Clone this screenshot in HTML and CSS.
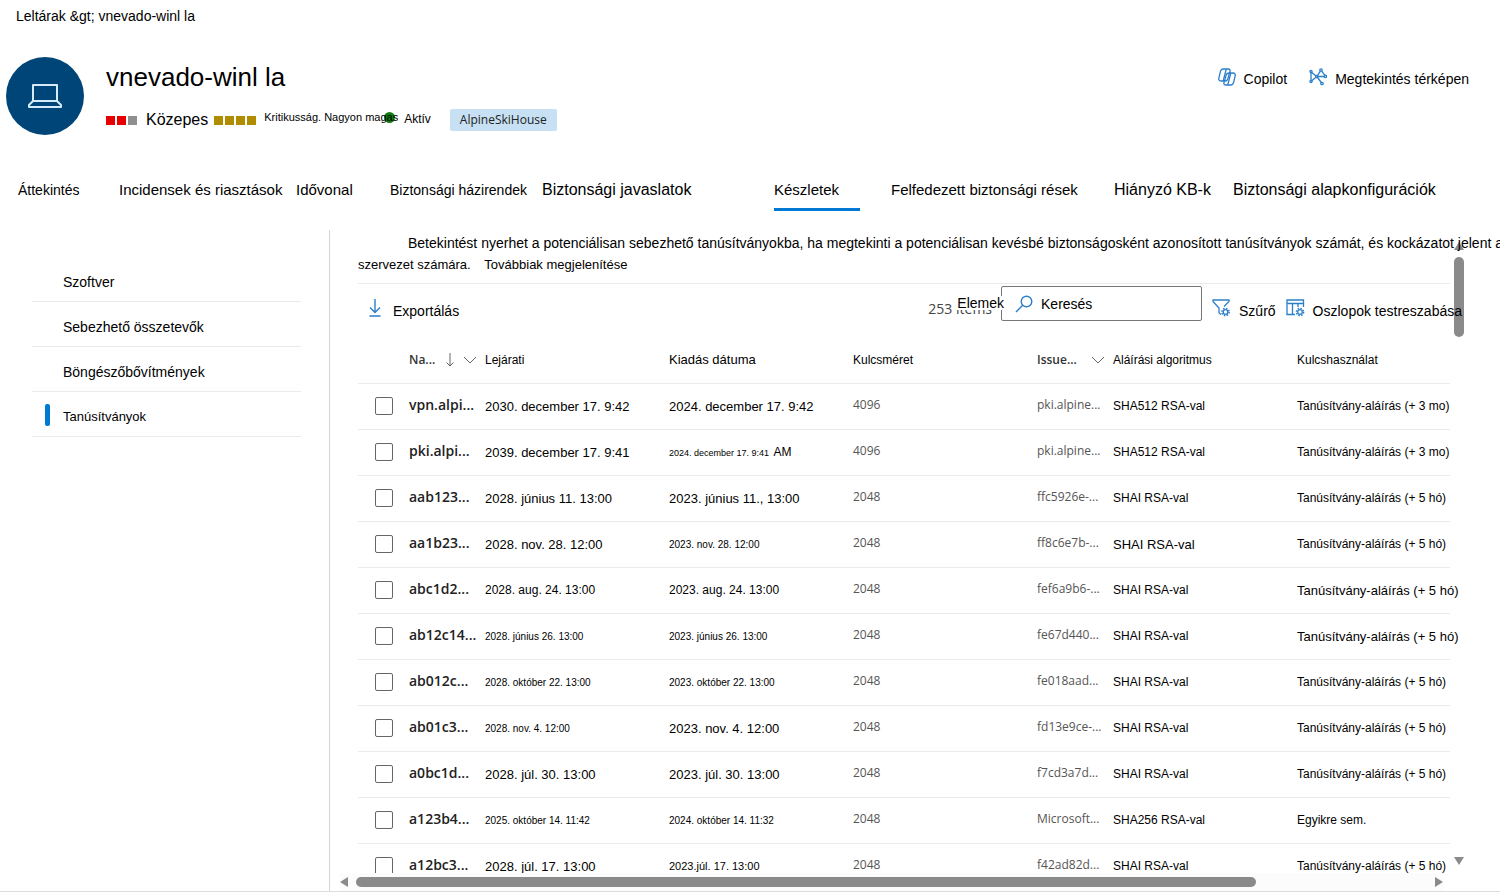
FILE: index.html
```
<!DOCTYPE html>
<html lang="hu">

<head>
    <meta charset="UTF-8">
    <meta name="viewport" content="width=device-width, initial-scale=1.0">
    <title>vnevado-winl la</title>
    <link rel="stylesheet" href="styles.css">
</head>

<body>

    <nav class="breadcrumb">Leltárak &amp;gt; vnevado-winl la</nav>

    <header class="device">
        <div class="avatar">
            <svg width="36" height="26" viewBox="0 0 36 26" fill="none" stroke="#d6ebfa" stroke-width="2" stroke-linejoin="round">
                <path d="M6 2h24v16H6z" />
                <path d="M6 18l-4 4v2h32v-2l-4-4z" />
            </svg>
        </div>
        <div class="device-info">
            <h1>vnevado-winl la</h1>
            <div class="meta">
                <span class="squares risk"><i></i><i></i><i></i></span>
                <span class="level">Közepes</span>
                <span class="squares critical"><i></i><i></i><i></i><i></i></span>
                <span class="criticality">Kritikusság. Nagyon magas</span>
                <span class="status">Aktív</span>
                <span class="tag">AlpineSkiHouse</span>
            </div>
        </div>
        <div class="actions">
            <button type="button">
                <svg width="18" height="18" viewBox="0 0 18 18" fill="none" stroke="#2b7fc9" stroke-width="1.300" stroke-linejoin="round">
                    <path d="M5 1h5.500c1.400 0 1.900 1.100 1.500 2.400L9.900 10.600C9.400 12.300 8.600 13 7 13H2.900C1.200 13 .4 11.800.8 10.300L2.500 3.200C2.900 1.800 3.700 1 5 1z" />
                    <path d="M13 17H7.500c-1.400 0-1.900-1.100-1.500-2.400L8.100 7.400C8.600 5.700 9.400 5 11 5h4.100c1.700 0 2.500 1.200 2.100 2.700l-1.700 7.100c-.4 1.400-1.200 2.200-2.500 2.200z" />
                    <path d="M8.500 1.200C8 2 7.800 3 7.500 4L5.200 13M9.500 16.800c.5-.8.700-1.800 1-2.800L12.800 5" />
                </svg>
                Copilot
            </button>
            <button type="button">
                <svg width="18" height="18" viewBox="0 0 18 18" fill="none" stroke="#2b7fc9" stroke-width="1.300">
                    <path d="M2 4v9M2.800 4.400l4.200 3.500M2.800 12.800l4.200-3.500M8.400 7.600l3-4.500M12.600 3.100l3.200 4.100M8.800 8.500h6.300M8.500 9.500l3.800 5" />
                    <circle cx="2" cy="3.500" r="1.100" />
                    <circle cx="2" cy="13.500" r="1.100" />
                    <circle cx="7.700" cy="8.600" r="1.100" />
                    <circle cx="12" cy="2" r="1.200" />
                    <circle cx="16.400" cy="8.300" r="1.200" />
                    <circle cx="13" cy="15.500" r="1.200" />
                </svg>
                Megtekintés térképen
            </button>
        </div>
    </header>

    <nav class="tabs">
        <a href="#" class="small">Áttekintés</a>
        <a href="#">Incidensek és riasztások</a>
        <a href="#">Idővonal</a>
        <a href="#" class="small">Biztonsági házirendek</a>
        <a href="#" class="large">Biztonsági javaslatok</a>
        <a href="#" class="active">Készletek</a>
        <a href="#">Felfedezett biztonsági rések</a>
        <a href="#" class="large">Hiányzó KB-k</a>
        <a href="#" class="large">Biztonsági alapkonfigurációk</a>
    </nav>

    <main>
        <aside>
            <nav class="side">
                <a href="#">Szoftver</a>
                <a href="#">Sebezhető összetevők</a>
                <a href="#">Böngészőbővítmények</a>
                <a href="#" class="active">Tanúsítványok</a>
            </nav>
        </aside>

        <section class="panel">
            <p class="intro"><span class="lead">Betekintést nyerhet a potenciálisan sebezhető tanúsítványokba, ha megtekinti a potenciálisan kevésbé biztonságosként azonosított tanúsítványok számát, és kockázatot jelent a</span><br>szervezet számára. <a href="#">Továbbiak megjelenítése</a></p>

            <div class="toolbar">
                <button type="button" class="export">
                    <svg width="16" height="18" viewBox="0 0 16 18" fill="none" stroke="#2b7fc9" stroke-width="1.400">
                        <path d="M8 0v13M3 8.500l5 5 5-5M2.500 17h11" />
                    </svg>
                    Exportálás
                </button>
                <span class="count">253 items<span class="count-label">Elemek</span></span>
                <label class="search">
                    <svg width="18" height="18" viewBox="0 0 18 18" fill="none" stroke="#2b7fc9" stroke-width="1.400">
                        <circle cx="11.500" cy="6.500" r="5.300" />
                        <path d="M7.700 10.300L1 17" />
                    </svg>
                    <input type="search" placeholder="Keresés" aria-label="Keresés">
                </label>
                <button type="button">
                    <svg width="19" height="18" viewBox="0 0 19 18" fill="none" stroke="#2b7fc9" stroke-width="1.300">
                        <path d="M9 15.500l-2-1.500V9L1 2.500V1h16v1.500L12 7.500" />
                        <circle cx="13.500" cy="13" r="2.300" />
                        <circle cx="13.500" cy="13" r="3.600" stroke-dasharray="1.500 1.330" stroke-width="1.500" />
                    </svg>
                    Szűrő
                </button>
                <button type="button">
                    <svg width="19" height="18" viewBox="0 0 19 18" fill="none" stroke="#2b7fc9" stroke-width="1.300">
                        <path d="M9 15.500H1V1h16.500v7M1 4.500h16.500M6.500 4.500v11M12 4.500V8" />
                        <circle cx="14" cy="13" r="2.300" />
                        <circle cx="14" cy="13" r="3.600" stroke-dasharray="1.500 1.330" stroke-width="1.500" />
                    </svg>
                    Oszlopok testreszabása
                </button>
            </div>

            <div class="table-wrap">
                <table>
                    <colgroup>
                        <col class="c-check">
                        <col class="c-name">
                        <col class="c-date">
                        <col class="c-date">
                        <col class="c-date">
                        <col class="c-name">
                        <col class="c-date">
                        <col>
                    </colgroup>
                    <thead>
                        <tr>
                            <th></th>
                            <th class="sortable"><div>Na...
                                <svg class="arrow" width="10" height="14" viewBox="0 0 10 14" fill="none" stroke="#666"><path d="M5 0v13M1.500 9.500L5 13l3.500-3.500" /></svg>
                                <svg class="chevron" width="14" height="8" viewBox="0 0 14 8" fill="none" stroke="#666"><path d="M1 1l6 6 6-6" /></svg>
                            </div></th>
                            <th>Lejárati</th>
                            <th class="date">Kiadás dátuma</th>
                            <th>Kulcsméret</th>
                            <th class="sortable"><div>Issue...
                                <svg class="chevron" width="14" height="8" viewBox="0 0 14 8" fill="none" stroke="#666"><path d="M1 1l6 6 6-6" /></svg>
                            </div></th>
                            <th>Aláírási algoritmus</th>
                            <th>Kulcshasználat</th>
                        </tr>
                    </thead>
                    <tbody>
                        <tr>
                            <td><input type="checkbox" aria-label="vpn.alpi..."></td>
                            <td class="name">vpn.alpi...</td>
                            <td class="date">2030. december 17. 9:42</td>
                            <td class="date">2024. december 17. 9:42</td>
                            <td class="gray">4096</td>
                            <td class="gray">pki.alpine...</td>
                            <td>SHA512 RSA-val</td>
                            <td>Tanúsítvány-aláírás (+ 3 mo)</td>
                        </tr>
                        <tr>
                            <td><input type="checkbox" aria-label="pki.alpi..."></td>
                            <td class="name">pki.alpi...</td>
                            <td class="date">2039. december 17. 9:41</td>
                            <td class="date-tiny">2024. december 17. 9:41 <span class="ampm">AM</span></td>
                            <td class="gray">4096</td>
                            <td class="gray">pki.alpine...</td>
                            <td>SHA512 RSA-val</td>
                            <td>Tanúsítvány-aláírás (+ 3 mo)</td>
                        </tr>
                        <tr>
                            <td><input type="checkbox" aria-label="aab123..."></td>
                            <td class="name">aab123...</td>
                            <td class="date">2028. június 11. 13:00</td>
                            <td class="date">2023. június 11., 13:00</td>
                            <td class="gray">2048</td>
                            <td class="gray">ffc5926e-...</td>
                            <td>SHAI RSA-val</td>
                            <td>Tanúsítvány-aláírás (+ 5 hó)</td>
                        </tr>
                        <tr>
                            <td><input type="checkbox" aria-label="aa1b23..."></td>
                            <td class="name">aa1b23...</td>
                            <td class="date">2028. nov. 28. 12:00</td>
                            <td class="date-small">2023. nov. 28. 12:00</td>
                            <td class="gray">2048</td>
                            <td class="gray">ff8c6e7b-...</td>
                            <td class="wide">SHAI RSA-val</td>
                            <td>Tanúsítvány-aláírás (+ 5 hó)</td>
                        </tr>
                        <tr>
                            <td><input type="checkbox" aria-label="abc1d2..."></td>
                            <td class="name">abc1d2...</td>
                            <td>2028. aug. 24. 13:00</td>
                            <td>2023. aug. 24. 13:00</td>
                            <td class="gray">2048</td>
                            <td class="gray">fef6a9b6-...</td>
                            <td>SHAI RSA-val</td>
                            <td class="wide">Tanúsítvány-aláírás (+ 5 hó)</td>
                        </tr>
                        <tr>
                            <td><input type="checkbox" aria-label="ab12c14..."></td>
                            <td class="name">ab12c14...</td>
                            <td class="date-small">2028. június 26. 13:00</td>
                            <td class="date-small">2023. június 26. 13:00</td>
                            <td class="gray">2048</td>
                            <td class="gray">fe67d440...</td>
                            <td>SHAI RSA-val</td>
                            <td class="wide">Tanúsítvány-aláírás (+ 5 hó)</td>
                        </tr>
                        <tr>
                            <td><input type="checkbox" aria-label="ab012c..."></td>
                            <td class="name">ab012c...</td>
                            <td class="date-small">2028. október 22. 13:00</td>
                            <td class="date-small">2023. október 22. 13:00</td>
                            <td class="gray">2048</td>
                            <td class="gray">fe018aad...</td>
                            <td>SHAI RSA-val</td>
                            <td>Tanúsítvány-aláírás (+ 5 hó)</td>
                        </tr>
                        <tr>
                            <td><input type="checkbox" aria-label="ab01c3..."></td>
                            <td class="name">ab01c3...</td>
                            <td class="date-small">2028. nov. 4. 12:00</td>
                            <td class="date">2023. nov. 4. 12:00</td>
                            <td class="gray">2048</td>
                            <td class="gray">fd13e9ce-...</td>
                            <td>SHAI RSA-val</td>
                            <td>Tanúsítvány-aláírás (+ 5 hó)</td>
                        </tr>
                        <tr>
                            <td><input type="checkbox" aria-label="a0bc1d..."></td>
                            <td class="name">a0bc1d...</td>
                            <td class="date">2028. júl. 30. 13:00</td>
                            <td class="date">2023. júl. 30. 13:00</td>
                            <td class="gray">2048</td>
                            <td class="gray">f7cd3a7d...</td>
                            <td>SHAI RSA-val</td>
                            <td>Tanúsítvány-aláírás (+ 5 hó)</td>
                        </tr>
                        <tr>
                            <td><input type="checkbox" aria-label="a123b4..."></td>
                            <td class="name">a123b4...</td>
                            <td class="date-small">2025. október 14. 11:42</td>
                            <td class="date-small">2024. október 14. 11:32</td>
                            <td class="gray">2048</td>
                            <td class="gray">Microsoft...</td>
                            <td>SHA256 RSA-val</td>
                            <td>Egyikre sem.</td>
                        </tr>
                        <tr>
                            <td><input type="checkbox" aria-label="a12bc3..."></td>
                            <td class="name">a12bc3...</td>
                            <td class="date">2028. júl. 17. 13:00</td>
                            <td class="date-medium">2023.júl. 17. 13:00</td>
                            <td class="gray">2048</td>
                            <td class="gray">f42ad82d...</td>
                            <td>SHAI RSA-val</td>
                            <td>Tanúsítvány-aláírás (+ 5 hó)</td>
                        </tr>
                    </tbody>
                </table>
            </div>

            <div class="scroll-x">
                <span class="arrow-left"></span>
                <div class="track"><div class="thumb"></div></div>
                <span class="arrow-right"></span>
            </div>
            <div class="scroll-y">
                <span class="arrow-up"></span>
                <div class="thumb"></div>
                <span class="arrow-down"></span>
            </div>
        </section>
    </main>

</body>

</html>
```
FILE: styles.css
```
* {
    margin: 0;
    padding: 0;
    box-sizing: border-box;
}

body {
    display: flex;
    flex-direction: column;
    height: 100vh;
    overflow: hidden;
    background-color: #fff;
    color: #000;
    font-family: "Liberation Sans", Arial, sans-serif;
    font-size: 14px;
    white-space: nowrap;
}

a {
    color: inherit;
    text-decoration: none;
}

button {
    display: flex;
    align-items: center;
    gap: 8px;
    border: none;
    background: none;
    color: inherit;
    font: inherit;
}

svg {
    flex: none;
}

.breadcrumb {
    padding: 6px 16px 0;
    line-height: 20px;
}

/* Device header */
.device {
    display: flex;
    padding: 31px 31px 0 6px;
}

.avatar {
    display: flex;
    align-items: center;
    justify-content: center;
    width: 78px;
    height: 78px;
    border-radius: 50%;
    background-color: #004578;
}

.device-info {
    padding: 3px 0 0 22px;
}

h1 {
    font-size: 26px;
    font-weight: normal;
    line-height: 34px;
}

.meta {
    display: flex;
    align-items: center;
    height: 24px;
    margin-top: 14px;
}

.squares {
    display: flex;
    gap: 2px;
}

.squares i {
    width: 9px;
    height: 9px;
    background-color: #e60000;
}

.risk i:last-child {
    background-color: #8f8f8f;
}

.critical i {
    background-color: #b08c00;
}

.level {
    margin: 0 6px 0 9px;
    font-size: 16px;
}

.criticality {
    position: relative;
    z-index: 0;
    margin: 0 6px 0 8px;
    padding-bottom: 6px;
    font-size: 11px;
}

.criticality::after {
    content: "";
    position: absolute;
    z-index: -1;
    right: 3px;
    top: 1px;
    width: 11px;
    height: 11px;
    border-radius: 50%;
    background-color: #107c10;
}

.status {
    padding-bottom: 2px;
    font-size: 12px;
}

.tag {
    margin-left: 19px;
    padding: 0 10px;
    border-radius: 2px;
    background-color: #c7e0f4;
    color: #222;
    font-family: "Open Sans", sans-serif;
    font-size: 12px;
    line-height: 22px;
}

.actions {
    display: flex;
    align-items: flex-start;
    gap: 22px;
    margin-left: auto;
    padding-top: 11px;
}

.actions button {
    line-height: 20px;
}

.actions svg {
    margin-bottom: 4px;
}

/* Page tabs */
.tabs {
    display: grid;
    grid-template-columns: 101fr 177fr 94fr 152fr 232fr 117fr 223fr 119fr 267fr;
    justify-items: start;
    margin-top: 35px;
    padding-left: 18px;
    font-size: 15px;
    line-height: 36px;
}

.tabs a {
    min-width: 0;
    padding-top: 2px;
    border-bottom: 3px solid transparent;
}

.tabs .small {
    font-size: 14px;
}

.tabs .large {
    font-size: 16px;
}

.tabs .active {
    padding-right: 21px;
    border-color: #0078d4;
}

/* Main area */
main {
    display: flex;
    flex: 1;
    min-height: 0;
    margin-top: 19px;
    border-bottom: 1px solid #ddd;
}

aside {
    flex: none;
    width: 330px;
    padding: 27px 28px 0 32px;
    border-right: 1px solid #d6d6d6;
}

.side a {
    position: relative;
    display: block;
    padding: 6px 0 0 31px;
    border-bottom: 1px solid #ebebeb;
    line-height: 38px;
}

.side .active {
    font-size: 13px;
}

.side .active::before {
    content: "";
    position: absolute;
    left: 13px;
    top: 12px;
    width: 5px;
    height: 22px;
    border-radius: 2px;
    background-color: #0078d4;
}

.panel {
    position: relative;
    z-index: 0;
    display: flex;
    flex: 1;
    flex-direction: column;
    min-width: 0;
    padding-left: 28px;
}

.intro {
    padding: 3px 0 8px;
    font-size: 13px;
    line-height: 21px;
    text-indent: 50px;
}

.lead {
    font-size: 14px;
}

.intro a {
    display: inline-block;
    margin-left: 10px;
    text-indent: 0;
}

.toolbar {
    display: flex;
    align-items: flex-start;
    height: 54px;
    margin-right: 38px;
    padding-top: 3px;
    /* the rule stops at the scrollbar, the last button does not */
    background: linear-gradient(#ebebeb, #ebebeb) 0 0 / calc(100% - 12px) 1px no-repeat;
}

.toolbar button {
    margin: 13px 0 0 10px;
    line-height: 20px;
}

.toolbar svg {
    margin-bottom: 6px;
}

.toolbar .export {
    gap: 10px;
    margin-right: auto;
    margin-left: 9px;
}

.count {
    position: relative;
    margin: 13px 9px 0 0;
    color: #444;
    font-family: "Open Sans", sans-serif;
    font-size: 14px;
    line-height: 20px;
}

.count-label {
    position: absolute;
    left: 29px;
    top: -3px;
    background-color: #fff;
    color: #000;
    font-family: "Liberation Sans", Arial, sans-serif;
    line-height: 14px;
}

.search {
    display: flex;
    align-items: center;
    gap: 8px;
    width: 201px;
    height: 35px;
    padding-left: 13px;
    border: 1px solid #767676;
    border-radius: 2px;
}

.search svg {
    margin: 0;
}

.search input {
    width: 120px;
    border: none;
    outline: none;
    background: none;
    font: inherit;
}

.search input::placeholder {
    color: #000;
}

/* Certificates */
.table-wrap {
    flex: 1;
    min-height: 0;
    overflow: hidden;
}

table {
    width: calc(100% - 50px);
    table-layout: fixed;
    border-collapse: collapse;
}

.c-check {
    width: 51px;
}

.c-name {
    width: 76px;
}

.c-date {
    width: 184px;
}

th,
td {
    height: 46px;
    border-bottom: 1px solid #ebebeb;
    font-size: 12px;
    font-weight: normal;
    text-align: left;
}

.sortable {
    color: #333;
    font-family: "Open Sans", sans-serif;
    font-weight: 600;
}

.sortable div {
    display: flex;
    align-items: center;
    padding-right: 8px;
}

.sortable .arrow {
    margin-left: 10px;
}

.sortable .chevron {
    margin-left: auto;
}

.date,
.wide {
    font-size: 13px;
}

.date-medium {
    font-size: 11px;
}

.date-small {
    font-size: 10px;
}

.date-tiny {
    font-size: 9px;
}

.ampm {
    margin-left: 2px;
    font-size: 12px;
}

.name {
    padding-bottom: 3px;
    color: #222;
    font-family: "Open Sans", sans-serif;
    font-size: 14px;
    font-weight: 600;
}

.gray {
    padding-bottom: 3px;
    color: #555;
    font-family: "Open Sans", sans-serif;
}

td input {
    display: block;
    width: 18px;
    height: 18px;
    margin-left: 17px;
    appearance: none;
    border: 1px solid #666;
    border-radius: 2px;
}

/* Scrollbars */
.thumb {
    border-radius: 5px;
    background-color: #8a8a8a;
}

.scroll-x {
    display: flex;
    align-items: center;
    gap: 8px;
    height: 18px;
    margin: 0 57px 0 -18px;
    background-color: #fcfcfc;
}

.track {
    flex: 1;
}

.scroll-x .thumb {
    width: 84%;
    height: 10px;
}

.scroll-y {
    position: absolute;
    z-index: -1;
    top: 12px;
    right: 33px;
    bottom: 26px;
    display: flex;
    flex-direction: column;
    align-items: center;
    width: 17px;
}

.scroll-y .thumb {
    width: 10px;
    height: 80px;
    margin: 7px 0 auto;
}

.arrow-left,
.arrow-right,
.arrow-up,
.arrow-down {
    border: 5px solid transparent;
}

.arrow-left {
    border-right: 8px solid #8a8a8a;
    border-left: 0;
}

.arrow-right {
    border-right: 0;
    border-left: 8px solid #8a8a8a;
}

.arrow-up {
    border-top: 0;
    border-bottom: 8px solid #8a8a8a;
}

.arrow-down {
    border-top: 8px solid #8a8a8a;
    border-bottom: 0;
}
```
